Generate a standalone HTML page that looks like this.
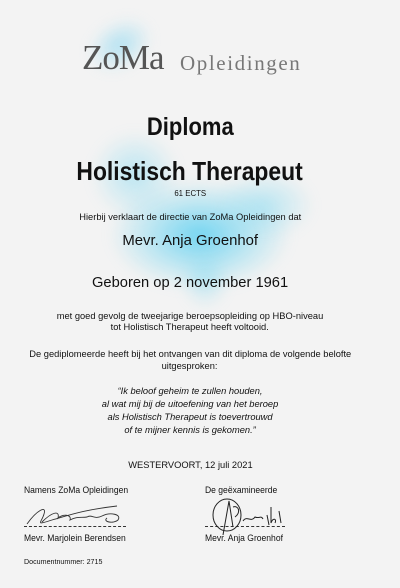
<!DOCTYPE html>
<html><head><meta charset="utf-8"><style>
html,body{margin:0;padding:0}
body{width:400px;height:588px;background:#f3f3f3;position:relative;overflow:hidden;font-family:"Liberation Sans",sans-serif;color:#111}
.t{position:absolute;left:-10px;width:400px;text-align:center;white-space:nowrap}
.t span{display:inline-block;transform:scaleX(.98)}
.t.h span{transform:scaleX(.88)}
.l{position:absolute;white-space:nowrap;transform-origin:left;transform:scaleX(.95)}
.splash{position:absolute;border-radius:50%;filter:blur(6px)}
</style></head><body>
<div class="splash" style="left:85px;top:20px;width:70px;height:50px;background:radial-gradient(ellipse,rgba(120,210,240,.55),rgba(120,210,240,0) 70%);transform:rotate(-30deg)"></div>
<div class="splash" style="left:110px;top:180px;width:180px;height:110px;background:radial-gradient(ellipse,rgba(60,200,240,.7),rgba(100,210,240,.25) 50%,rgba(120,210,240,0) 72%)"></div>
<div class="splash" style="left:90px;top:130px;width:90px;height:90px;background:radial-gradient(ellipse,rgba(100,210,240,.4),rgba(120,210,240,0) 70%)"></div>
<div class="splash" style="left:215px;top:170px;width:100px;height:70px;background:radial-gradient(ellipse,rgba(100,210,240,.4),rgba(120,210,240,0) 70%)"></div>
<div class="splash" style="left:180px;top:250px;width:50px;height:60px;background:radial-gradient(ellipse,rgba(100,210,240,.35),rgba(120,210,240,0) 70%)"></div>

<div style="position:absolute;left:82px;top:38px;font-family:'Liberation Serif',serif;font-size:35px;color:#555;letter-spacing:-1px">ZoMa</div>
<div style="position:absolute;left:180px;top:51px;font-family:'Liberation Serif',serif;font-size:21px;color:#777;letter-spacing:1.6px">Opleidingen</div>

<div class="t h" style="top:113px;font-size:25px;font-weight:bold"><span>Diploma</span></div>
<div class="t h" style="top:156px;font-size:26px;font-weight:bold"><span>Holistisch Therapeut</span></div>
<div class="t" style="top:189px;font-size:8px"><span>61 ECTS</span></div>
<div class="t" style="top:212px;font-size:9.5px"><span>Hierbij verklaart de directie van ZoMa Opleidingen dat</span></div>
<div class="t" style="top:232px;font-size:15.2px"><span>Mevr. Anja Groenhof</span></div>
<div class="t" style="top:274px;font-size:15px"><span>Geboren op 2 november 1961</span></div>
<div class="t" style="top:311px;font-size:9.5px"><span>met goed gevolg de tweejarige beroepsopleiding op HBO-niveau</span></div>
<div class="t" style="top:322px;font-size:9.5px"><span>tot Holistisch Therapeut heeft voltooid.</span></div>
<div class="t" style="top:349px;font-size:9.5px"><span>De gediplomeerde heeft bij het ontvangen van dit diploma de volgende belofte</span></div>
<div class="t" style="top:361px;font-size:9.5px"><span>uitgesproken:</span></div>
<div class="t" style="top:385px;font-size:9.5px;font-style:italic;line-height:13px"><span>“Ik beloof geheim te zullen houden,<br>al wat mij bij de uitoefening van het beroep<br>als Holistisch Therapeut is toevertrouwd<br>of te mijner kennis is gekomen.”</span></div>

<div class="t" style="top:460px;font-size:9.5px"><span>WESTERVOORT, 12 juli 2021</span></div>
<div class="l" style="left:24px;top:485px;font-size:9px">Namens ZoMa Opleidingen</div>
<div class="l" style="left:205px;top:485px;font-size:9px">De geëxamineerde</div>
<div style="position:absolute;left:24px;top:526px;width:102px;border-top:1px dashed #333"></div>
<div style="position:absolute;left:205px;top:526px;width:80px;border-top:1px dashed #333"></div>
<svg style="position:absolute;left:22px;top:500px" width="110" height="30" viewBox="0 0 110 30" fill="none" stroke="#333" stroke-width=".9">
<path d="M5 24 C15 10 25 5 22 14 C20 22 12 26 30 20 C45 16 60 10 95 6"/>
<path d="M20 22 C30 12 38 10 36 18 C40 14 50 14 48 20 C55 16 60 18 65 17 C70 14 72 20 80 16 C88 12 100 14 96 20 C92 24 80 22 85 18"/>
</svg>
<svg style="position:absolute;left:205px;top:497px" width="90" height="40" viewBox="0 0 90 40" fill="none" stroke="#222" stroke-width="1">
<ellipse cx="22" cy="18" rx="14" ry="16"/>
<path d="M18 38 L24 4 L28 30 M28 10 C34 8 36 16 30 20 M38 24 C42 18 46 26 50 20 C54 22 56 18 58 22 M62 18 L64 28 M66 10 L66 26 C68 20 72 22 70 26 M74 14 L76 26"/>
</svg>
<div class="l" style="left:24px;top:533px;font-size:9px">Mevr. Marjolein Berendsen</div>
<div class="l" style="left:205px;top:533px;font-size:9px">Mevr. Anja Groenhof</div>
<div class="l" style="left:24px;top:557px;font-size:7.5px">Documentnummer: 2715</div>
</body></html>
